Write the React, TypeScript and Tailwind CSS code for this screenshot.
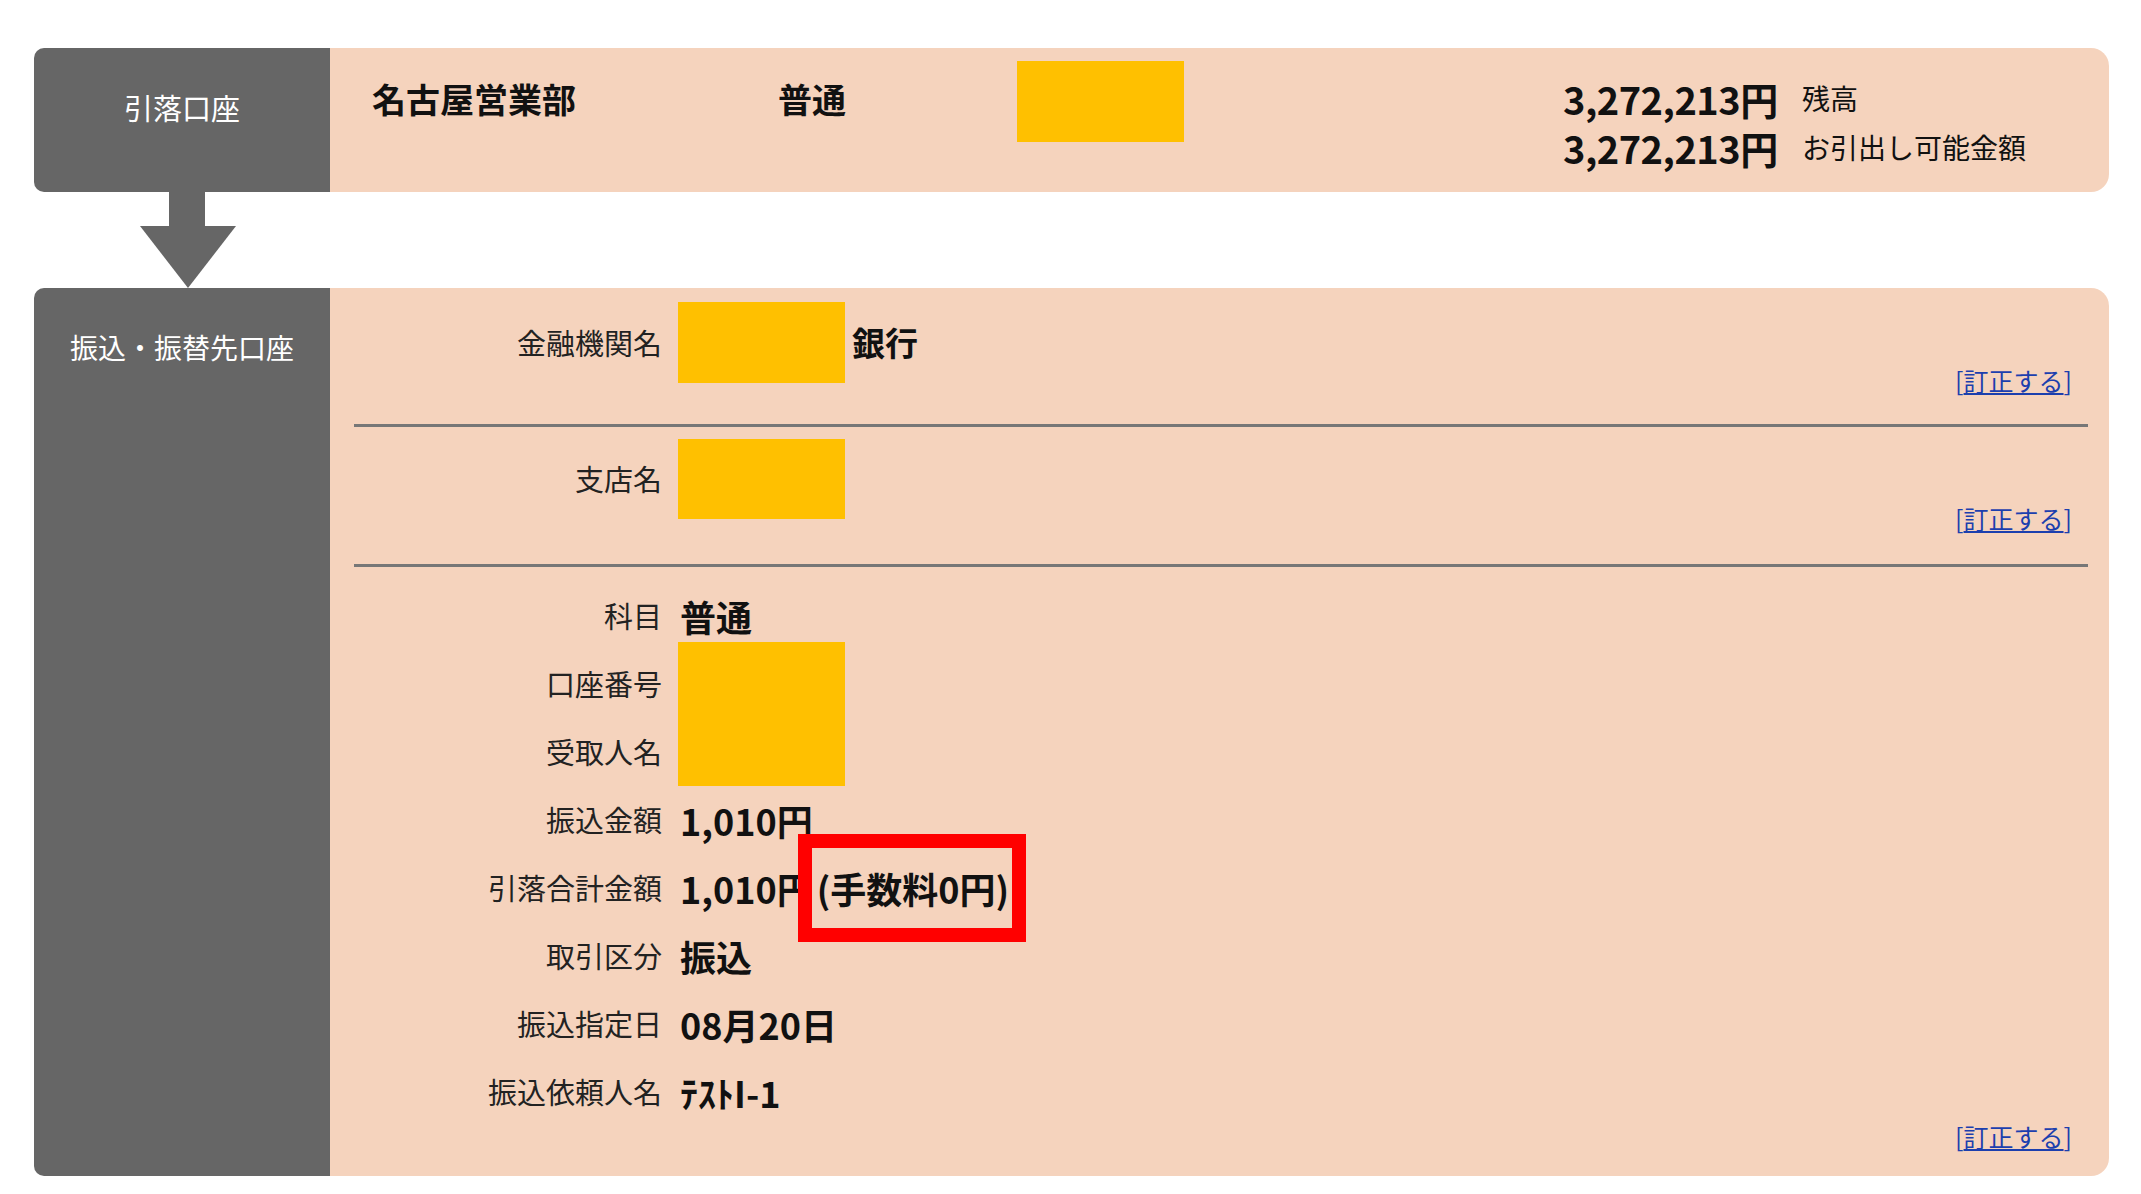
import React from "react";

function FixLink() {
  return (
    <a className="text-[25px] leading-[28px] text-[#1c3fae] whitespace-nowrap cursor-pointer">
      [<span className="underline underline-offset-2">訂正する</span>]
    </a>
  );
}

function Row({ label, children }: { label: string; children: React.ReactNode }) {
  return (
    <div className="flex items-center h-[68px]">
      <div className="w-[332px] shrink-0 text-right text-[29px] text-[#222]">{label}</div>
      <div className="ml-[18px] text-[36px] font-bold text-[#111] whitespace-nowrap flex items-center">
        {children}
      </div>
    </div>
  );
}

export default function App() {
  return (
    <div className="min-h-screen bg-white pt-[48px] pl-[34px] font-['Noto_Sans_CJK_JP','Noto_Sans',sans-serif] text-[#111]">
      <div className="w-[2075px]">
        {/* 引落口座 */}
        <div className="flex h-[144px]">
          <div className="w-[296px] shrink-0 bg-[#666666] rounded-l-[10px] pt-[39px] text-center text-white text-[29px] leading-[40px]">
            引落口座
          </div>
          <div className="flex-1 bg-[#f5d3bd] rounded-r-[18px] flex items-start">
            <div className="w-[448px] shrink-0 pl-[42px] mt-[26px] text-[34px] font-bold leading-[49px]">
              名古屋営業部
            </div>
            <div className="w-[239px] shrink-0 mt-[26px] text-[34px] font-bold leading-[49px]">普通</div>
            <div className="w-[167px] h-[81px] shrink-0 mt-[13px] bg-[#ffc000]" />
            <div className="ml-[379px] mt-[26px] grid grid-cols-[214px_auto] gap-x-[25px] leading-[49px] whitespace-nowrap">
              <span className="text-right text-[38px] font-bold tracking-[-0.5px]">3,272,213円</span>
              <span className="text-[28px]">残高</span>
              <span className="text-right text-[38px] font-bold tracking-[-0.5px]">3,272,213円</span>
              <span className="text-[28px]">お引出し可能金額</span>
            </div>
          </div>
        </div>

        {/* arrow */}
        <div className="h-[96px] pl-[106px]">
          <svg width="96" height="96" viewBox="0 0 96 96">
            <rect x="29" y="0" width="36" height="35" fill="#666666" />
            <polygon points="0,34 96,34 48,96" fill="#666666" />
          </svg>
        </div>

        {/* 振込・振替先口座 */}
        <div className="flex h-[888px]">
          <div className="w-[296px] shrink-0 bg-[#666666] rounded-l-[10px] pt-[39px] text-center text-white text-[28px] leading-[40px]">
            振込・振替先口座
          </div>
          <div className="flex-1 bg-[#f5d3bd] rounded-r-[18px] flex flex-col">
            <div className="h-[136px] flex items-end justify-between pr-[37px]">
              <div className="self-start mt-[14px] flex items-center">
                <div className="w-[332px] shrink-0 text-right text-[29px] text-[#222]">金融機関名</div>
                <div className="ml-[16px] w-[167px] h-[81px] bg-[#ffc000]" />
                <div className="ml-[7px] text-[33px] font-bold">銀行</div>
              </div>
              <div className="mb-[28px]">
                <FixLink />
              </div>
            </div>
            <div className="ml-[24px] mr-[21px] h-[3px] bg-[#777777]" />

            <div className="h-[137px] flex items-end justify-between pr-[37px]">
              <div className="self-start mt-[12px] flex items-center">
                <div className="w-[332px] shrink-0 text-right text-[29px] text-[#222]">支店名</div>
                <div className="ml-[16px] w-[167px] h-[80px] bg-[#ffc000]" />
              </div>
              <div className="mb-[30px]">
                <FixLink />
              </div>
            </div>
            <div className="ml-[24px] mr-[21px] h-[3px] bg-[#777777]" />

            <div className="pt-[15px] flex flex-col">
              <Row label="科目">普通</Row>
              <div className="flex">
                <div className="w-[332px] shrink-0 text-[29px] text-[#222]">
                  <div className="h-[68px] flex items-center justify-end">口座番号</div>
                  <div className="h-[68px] flex items-center justify-end">受取人名</div>
                </div>
                <div className="ml-[16px] -mt-[8px] w-[167px] h-[144px] bg-[#ffc000]" />
              </div>
              <Row label="振込金額">1,010円</Row>
              <Row label="引落合計金額">
                <span>1,010円</span>
                <span className="relative ml-[4px]">
                  (手数料0円)
                  <span className="absolute left-[-19px] right-[-17px] top-1/2 -translate-y-1/2 h-[108px] border-[14px] border-[#ff0000]" />
                </span>
              </Row>
              <Row label="取引区分">振込</Row>
              <Row label="振込指定日">08月20日</Row>
              <Row label="振込依頼人名">ﾃｽﾄI-1</Row>
              <div className="flex justify-end pr-[37px] -mt-[4px]">
                <FixLink />
              </div>
            </div>
          </div>
        </div>
      </div>
    </div>
  );
}
